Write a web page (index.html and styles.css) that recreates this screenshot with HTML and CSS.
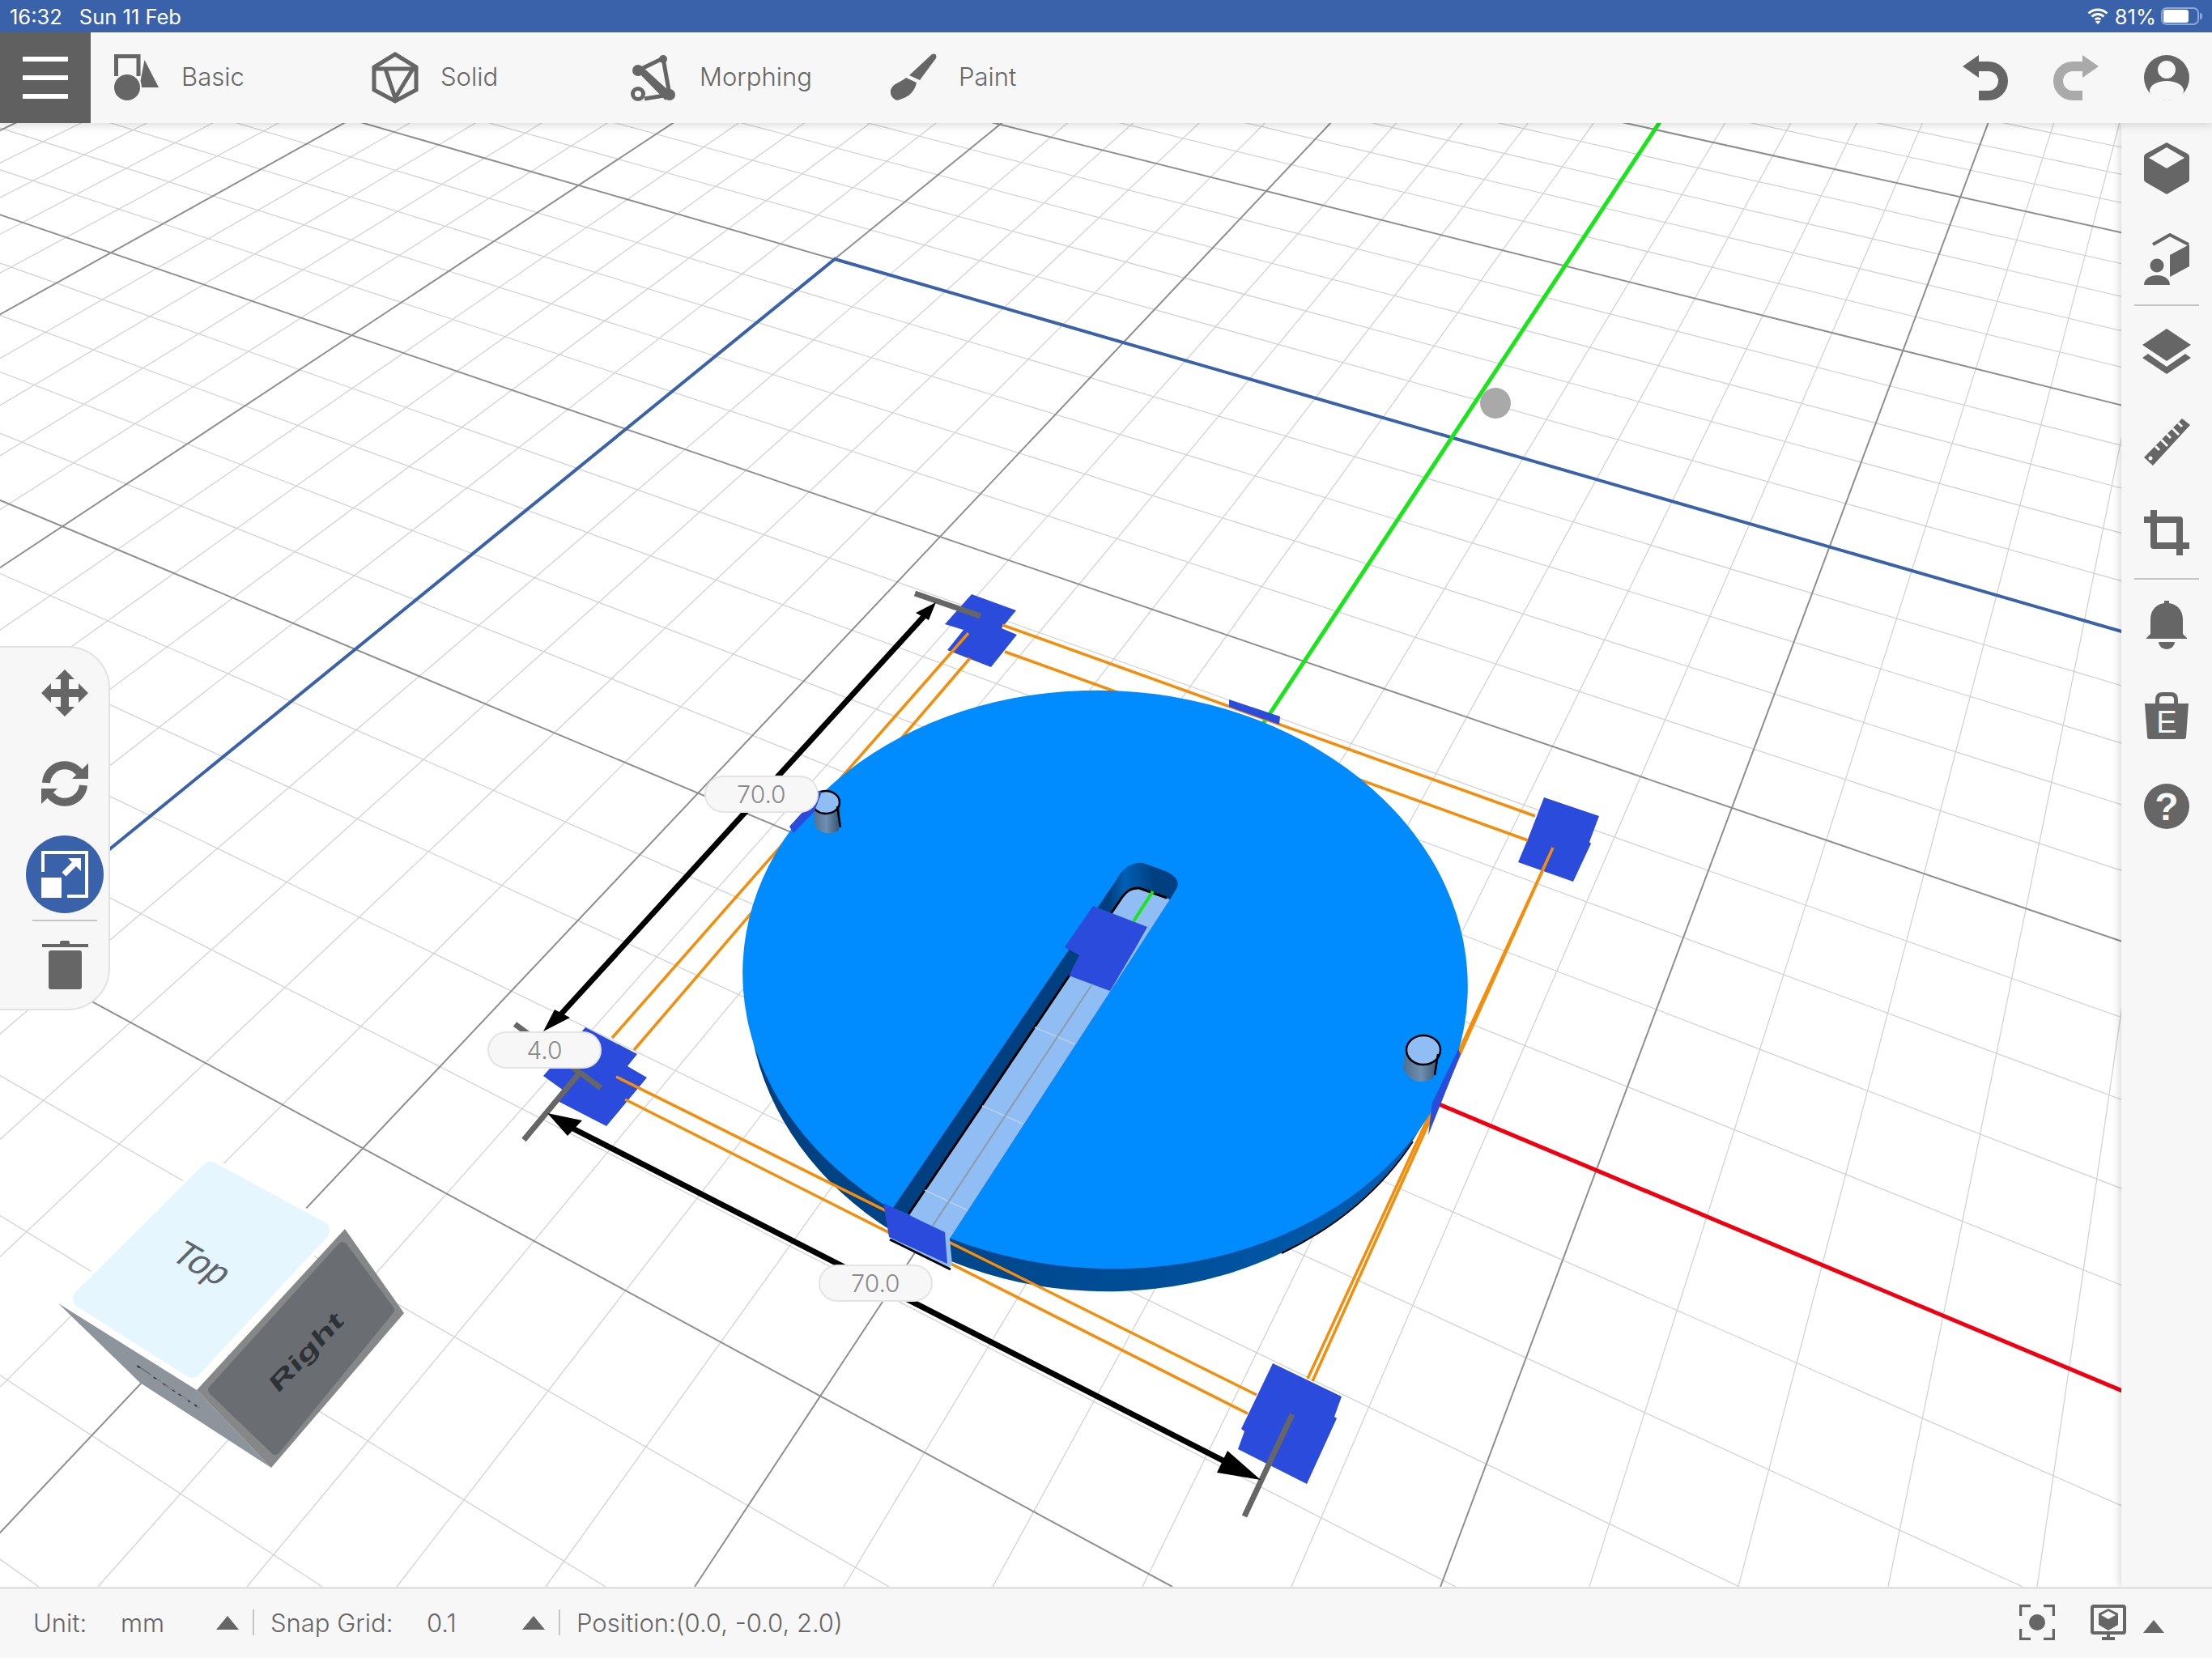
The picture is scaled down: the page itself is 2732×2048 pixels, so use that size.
FILE: index.html
```html
<!DOCTYPE html>
<html lang="en">

<head>
    <meta charset="UTF-8">
    <meta name="viewport" content="width=device-width, initial-scale=1.0">
    <title>Morphing - Scale</title>
    <link rel="stylesheet" href="styles.css">
</head>
<body>
<div class="app">

    <!-- iPad status bar -->
    <div class="ios-bar">
        <span class="ios-time">16:32</span>
        <span class="ios-date">Sun 11 Feb</span>
        <div class="ios-right">
            <svg width="26" height="20" viewBox="0 0 26 20">
                <path class="wifi" d="M1.5 6.5C8 .5 18 .5 24.5 6.5M5.5 10.5C10 6.5 16 6.5 20.500 10.500M9.500 14.200C11.500 12.600 14.500 12.600 16.500 14.200"/>
                <path class="wifi-dot" d="M13 20l-3.200-3.400C11.500 15.400 14.500 15.400 16.200 16.600z"/>
            </svg>
            <span class="ios-pct">81%</span>
            <div class="battery"><div class="battery-level"></div></div>
            <div class="battery-nub"></div>
        </div>
    </div>

    <!-- Top toolbar -->
    <div class="toolbar">
        <div class="menu-btn">
            <span></span><span></span><span></span>
        </div>
        <div class="tool">
            <svg class="ico" width="64" height="64" viewBox="0 0 64 64">
                <path class="ico-line" d="M7.500 30V5.500H35V30"/>
                <path d="M42.500 10L60 44H36z"/>
                <circle class="ico-cut" cx="21" cy="44" r="17"/>
            </svg>
            <span>Basic</span>
        </div>
        <div class="tool">
            <svg class="ico" width="64" height="64" viewBox="0 0 64 64">
                <path class="ico-line" d="M32 3L58 19V47L32 61L6 47V19zM7 21H57M20 21L32 57L54 21"/>
            </svg>
            <span>Solid</span>
        </div>
        <div class="tool">
            <svg class="ico" width="64" height="64" viewBox="0 0 64 64">
                <path class="ico-line" d="M12 23L43 8L51 53L20 58"/>
                <path d="M9 22L17 18L52 50L46 60z"/>
                <circle cx="43" cy="9" r="5"/>
                <circle cx="12" cy="23" r="7"/>
                <circle cx="51" cy="53" r="7"/>
                <circle class="ico-ring" cx="12" cy="52" r="6.500"/>
            </svg>
            <span>Morphing</span>
        </div>
        <div class="tool">
            <svg class="ico" width="64" height="64" viewBox="0 0 64 64">
                <path d="M55 3C60 1 61 5 60 8L40 35L27 29z"/>
                <path d="M23 32L36 38C34 48 28 56 12 60C5 58 2 50 5 45C9 38 16 38 23 32z"/>
            </svg>
            <span>Paint</span>
        </div>
        <div class="toolbar-right">
            <svg class="ico" width="56" height="56" viewBox="0 0 56 56">
                <path d="M0 14L20 0V28z"/>
                <path class="undo-line" d="M18 14H32A18 18 0 0 1 32 50H20"/>
            </svg>
            <svg class="ico ico-off" width="56" height="56" viewBox="0 0 56 56">
                <path d="M56 14L36 0V28z"/>
                <path class="undo-line" d="M38 14H24A18 18 0 0 0 24 50H36"/>
            </svg>
            <svg class="ico" width="56" height="56" viewBox="0 0 56 56">
                <circle cx="28" cy="28" r="28"/>
                <circle class="ico-white" cx="28" cy="18" r="11"/>
                <ellipse class="ico-white" cx="28" cy="44" rx="21" ry="12"/>
            </svg>
        </div>
    </div>

    <div class="workspace">
        <div class="viewport">
            <svg class="scene" width="2620" height="1808" viewBox="0 152 2620 1808">
                <defs>
                    <linearGradient id="rim" gradientUnits="userSpaceOnUse" x1="930" y1="0" x2="1800" y2="0">
                        <stop offset="0" stop-color="#003f7e"/>
                        <stop offset="0.6" stop-color="#004e98"/>
                        <stop offset="1" stop-color="#0060b4"/>
                    </linearGradient>
                    <linearGradient id="cap" gradientUnits="userSpaceOnUse" x1="1370" y1="0" x2="1425" y2="0">
                        <stop offset="0" stop-color="#004080"/>
                        <stop offset="0.35" stop-color="#0060b4"/>
                        <stop offset="1" stop-color="#004080"/>
                    </linearGradient>
                    <linearGradient id="peg" x1="0" y1="0" x2="1" y2="0">
                        <stop offset="0" stop-color="#4f6e8e"/>
                        <stop offset="0.5" stop-color="#6f8fb0"/>
                        <stop offset="1" stop-color="#33506e"/>
                    </linearGradient>
                </defs>

                <!-- grid: both pencils run out of their vanishing point -->
                <path class="grid-minor" d="M2989 -1274L-3563 1960M2989 -1274L-3379 1960M2989 -1274L-3194 1960M2989 -1274L-3010 1960M2989 -1274L-2642 1960M2989 -1274L-2458 1960M2989 -1274L-2273 1960M2989 -1274L-2089 1960M2989 -1274L-1721 1960M2989 -1274L-1537 1960M2989 -1274L-1352 1960M2989 -1274L-1168 1960M2989 -1274L-800 1960M2989 -1274L-616 1960M2989 -1274L-431 1960M2989 -1274L-247 1960M2989 -1274L121 1960M2989 -1274L305 1960M2989 -1274L490 1960M2989 -1274L674 1960M2989 -1274L1042 1960M2989 -1274L1226 1960M2989 -1274L1411 1960M2989 -1274L1595 1960M2989 -1274L1963 1960M2989 -1274L2147 1960M2989 -1274L2332 1960M2989 -1274L2516 1960"/>
                <path class="grid-minor" d="M-4570 -1300L48 1960M-4570 -1300L398 1960M-4570 -1300L748 1960M-4570 -1300L1098 1960M-4570 -1300L1798 1960M-4570 -1300L2148 1960M-4570 -1300L2498 1960M-4570 -1300L2848 1960M-4570 -1300L3548 1960M-4570 -1300L3898 1960M-4570 -1300L4248 1960M-4570 -1300L4598 1960M-4570 -1300L5298 1960M-4570 -1300L5648 1960M-4570 -1300L5998 1960M-4570 -1300L6348 1960M-4570 -1300L7048 1960M-4570 -1300L7398 1960M-4570 -1300L7748 1960M-4570 -1300L8098 1960M-4570 -1300L8798 1960M-4570 -1300L9148 1960M-4570 -1300L9498 1960M-4570 -1300L9848 1960M-4570 -1300L10548 1960M-4570 -1300L10898 1960M-4570 -1300L11248 1960M-4570 -1300L11598 1960"/>
                <path class="grid-major" d="M2989 -1274L-3747 1960M2989 -1274L-2826 1960M2989 -1274L-1905 1960M2989 -1274L-984 1960M2989 -1274L-63 1960M2989 -1274L858 1960M2989 -1274L1779 1960"/>
                <path class="grid-major" d="M-4570 -1300L1448 1960M-4570 -1300L3198 1960M-4570 -1300L4948 1960M-4570 -1300L6698 1960M-4570 -1300L8448 1960M-4570 -1300L10198 1960"/>

                <!-- axes -->
                <path class="axis-blue" d="M-984 1960L1031 320L6698 1960"/>
                <path class="axis-green" d="M1365 1190L2989 -1274"/>
                <path class="axis-red" d="M1365 1191L3198 1960"/>
                <circle class="origin-dot" cx="1847" cy="498" r="19"/>

                <!-- view cube -->
                <polygon class="cube-white" points="258,1427 420,1515 243,1717 72,1610"/>
                <polygon class="cube-left" points="72,1610 173,1708 335,1813 243,1717"/>
                <text class="cube-front" transform="matrix(1.150 0.780 -0.050 0.080 166 1686)">Front</text>
                <polygon class="cube-right" points="426,1518 499,1622 335,1813 243,1717"/>
                <polygon class="cube-right-in" points="263,1717 423,1540 481,1618 340,1791"/>
                <polygon class="cube-top" points="260,1447 395,1520 237,1690 102,1604"/>
                <text class="cube-top-text" transform="matrix(1.050 0.600 -0.900 0.900 208 1554)">Top</text>
                <text class="cube-right-text" transform="matrix(0.900 -0.960 0.500 0.640 343 1722)">Right</text>

                <!-- corner handles, under the wires -->
                <polygon class="handle" points="1200,734 1255,754 1237,776 1256,784 1224,824 1170,803 1190,778 1167,771"/>
                <polygon class="handle" points="723,1269 787,1302 775,1317 799,1331 749,1391 685,1358 696,1347 671,1329"/>
                <polygon class="handle" points="1907,985 1975,1008 1963,1040 1965,1042 1943,1089 1875,1065 1888,1034"/>
                <polygon class="handle" points="1572,1684 1657,1725 1648,1750 1651,1752 1614,1833 1529,1790 1537,1768 1533,1765"/>

                <!-- disc side -->
                <ellipse class="disc-rim" cx="1360" cy="1233" rx="436" ry="362" transform="rotate(2.850 1360 1233)"/>
                <path class="disc-edge" d="M1745 1410A436 362 2.850 0 1 1583 1548"/>

                <!-- bounding box wires -->
                <path class="wire" d="M1238 772L1896 1008M1241 805L1887 1038M1196 782L756 1282M1198 813L783 1297M761 1330L1552 1723M772 1358L1541 1746M1918 1047L1615 1703M1918 1047L1621 1706"/>

                <!-- disc top and slot -->
                <ellipse class="disc-top" cx="1365" cy="1210" rx="448" ry="357" transform="rotate(2.850 1365 1210)"/>
                <path class="slot-wall" d="M1103 1492L1378 1088Q1390 1064 1412 1066L1437 1075Q1460 1084 1453 1098L1445 1111L1173 1530L1122 1500z"/>
                <path class="slot-floor" d="M1122 1500L1386 1108Q1394 1096 1407 1097L1445 1111L1173 1530z"/>
                <path class="slot-edge" d="M1122 1500L1386 1108Q1394 1096 1407 1097L1441 1109"/>
                <path class="slot-minor" d="M1278 1269L1328 1290M1213 1366L1263 1388M1142 1470L1195 1495"/>
                <path class="slot-major" d="M1348 1217L1152 1514"/>
                <path class="slot-green" d="M1424 1101L1400 1138"/>

                <!-- pegs -->
                <path class="peg" d="M1003 991L1007 1022Q1020 1034 1036 1026L1038 991z"/>
                <ellipse class="peg-top" cx="1020" cy="991" rx="17" ry="14"/>
                <path class="peg-line" d="M1034 996L1038 1022"/>
                <path class="peg" d="M1736 1297L1733 1320Q1745 1344 1770 1332L1778 1297z"/>
                <ellipse class="peg-top" cx="1758" cy="1297" rx="21" ry="18"/>
                <path class="peg-line" d="M1776 1302L1772 1328"/>

                <!-- edge handles -->
                <polygon class="handle" points="1518,864 1581,885 1580,895 1518,873"/>
                <polygon class="handle" points="975,1021 980,1029 1006,1002 1015,978 1008,976 1003,990"/>
                <polygon class="handle" points="1801,1296 1804,1302 1764,1402 1769,1362"/>
                <polygon class="handle" points="1350,1119 1417,1145 1403,1170 1371,1224 1320,1205 1333,1180 1315,1170"/>
                <polygon class="slot-floor" points="1099,1530 1167,1522 1173,1530 1176,1562 1172,1566"/>
                <path class="slot-under" d="M1099 1531L1174 1568"/>
                <polygon class="handle" points="1091,1486 1167,1522 1170,1561 1098,1528"/>

                <!-- dimension arrows -->
                <path class="dim-tick" d="M1130 733L1211 761M636 1265L742 1344M716 1325L647 1408M1596 1747L1537 1873"/>
                <path class="dim" d="M1145 757L688 1258M690 1385L1530 1814"/>
                <polygon class="dim-head" points="1156,744 1131,757 1147,766"/>
                <polygon class="dim-head" points="671,1274 685,1247 704,1257"/>
                <polygon class="dim-head" points="676,1375 719,1384 701,1403"/>
                <polygon class="dim-head" points="1557,1828 1516,1792 1503,1819"/>
            </svg>

            <!-- size labels -->
            <div class="dim-label dim-label-a">70.0</div>
            <div class="dim-label dim-label-b">4.0</div>
            <div class="dim-label dim-label-c">70.0</div>

            <!-- Move / rotate / scale panel -->
            <div class="gizmo-panel">
                <div class="gizmo-item">
                    <svg class="ico" width="58" height="58" viewBox="0 0 58 58">
                        <path d="M29 0L41 12H34V24H46V17L58 29L46 41V34H34V46H41L29 58L17 46H24V34H12V41L0 29L12 17V24H24V12H17z"/>
                    </svg>
                </div>
                <div class="gizmo-item">
                    <svg class="ico" width="58" height="56" viewBox="0 0 58 56">
                        <path class="rotate-line" d="M6 27A23 23 0 0 1 47 14"/>
                        <path d="M58 3V22H38z"/>
                        <path class="rotate-line" d="M52 30A23 23 0 0 1 11 42"/>
                        <path d="M0 53V34H20z"/>
                    </svg>
                </div>
                <div class="gizmo-item">
                    <div class="gizmo-active">
                        <svg width="58" height="58" viewBox="0 0 58 58">
                            <path class="scale-frame" d="M2 26V2H56V56H32"/>
                            <rect class="scale-fill" x="0" y="33" width="25" height="25"/>
                            <path class="scale-arrow" d="M28 29L44 13"/>
                            <path class="scale-fill" d="M33 9H49V25z"/>
                        </svg>
                    </div>
                </div>
                <div class="panel-sep"></div>
                <div class="gizmo-item gizmo-last">
                    <svg class="ico" width="57" height="60" viewBox="0 0 57 60">
                        <rect x="0" y="4" width="57" height="4"/>
                        <rect x="22" y="0" width="12" height="6" rx="2"/>
                        <rect x="8" y="12" width="41" height="48" rx="3"/>
                    </svg>
                </div>
            </div>
        </div>

        <!-- Right sidebar -->
        <div class="sidebar">
            <div class="side-item">
                <svg class="ico" width="56" height="64" viewBox="0 0 56 64">
                    <path d="M28 0L54 14Q56 15 56 18V46Q56 48 54 49L28 64L2 49Q0 48 0 46V18Q0 15 2 14z"/>
                    <path class="ico-white" d="M28 6L50 19L28 32L6 19z"/>
                </svg>
            </div>
            <div class="side-item">
                <svg class="ico" width="56" height="64" viewBox="0 0 56 64">
                    <path class="person-line" d="M11 14L32 2L55 14"/>
                    <path d="M32 27L56 14V41L32 54z"/>
                    <circle cx="16" cy="40" r="8.500"/>
                    <path d="M0 64C0 56 8 52 16 52S32 56 32 64z"/>
                </svg>
            </div>
            <div class="side-sep"></div>
            <div class="side-item">
                <svg class="ico" width="60" height="56" viewBox="0 0 60 56">
                    <path d="M30 0L60 20L30 40L0 20z"/>
                    <path d="M7 31L30 47L53 31L60 36L30 56L0 36z"/>
                </svg>
            </div>
            <div class="side-item">
                <svg class="ico" width="57" height="58" viewBox="0 0 57 58">
                    <path d="M47 0L57 8L11 58L0 48z"/>
                    <path class="ruler-ticks" d="M14 34L19 39M21 26L29 34M28 19L33 24M35 12L43 20M42 5L47 10"/>
                    <circle class="ico-white" cx="8" cy="49" r="2.500"/>
                </svg>
            </div>
            <div class="side-item">
                <svg class="ico crop-icon" width="56" height="56" viewBox="0 0 56 56">
                    <path d="M0 8H8V0H16V8H44Q48 8 48 12V40H56V48H48V56H40V48H12Q8 48 8 44V16H0zM16 16V40H40V16z"/>
                </svg>
            </div>
            <div class="side-sep"></div>
            <div class="side-item">
                <svg class="ico" width="50" height="60" viewBox="0 0 50 60">
                    <rect x="22" y="0" width="6" height="6"/>
                    <path d="M25 3C37 3 45 11 45 23V41L50 46V47H0V46L5 41V23C5 11 13 3 25 3z"/>
                    <path d="M15 51H35A10 9 0 0 1 15 51z"/>
                </svg>
            </div>
            <div class="side-item">
                <svg class="ico" width="54" height="58" viewBox="0 0 54 58">
                    <path class="bag-handle" d="M15.500 16V9Q15.500 2.500 22 2.500H32Q38.500 2.500 38.500 9V16"/>
                    <path d="M0 14H54L51 55Q51 58 48 58H6Q3 58 3 55z"/>
                    <text class="bag-letter" x="27" y="50">E</text>
                </svg>
            </div>
            <div class="side-item">
                <svg class="ico" width="56" height="56" viewBox="0 0 56 56">
                    <circle cx="28" cy="28" r="28"/>
                    <text class="help-mark" x="28" y="45">?</text>
                </svg>
            </div>
        </div>
    </div>

    <!-- Bottom status bar -->
    <div class="statusbar">
        <span class="st-label st-unit">Unit:</span>
        <span class="st-value">mm</span>
        <span class="caret"></span>
        <span class="st-sep"></span>
        <span class="st-label st-snap">Snap Grid:</span>
        <span class="st-value">0.1</span>
        <span class="caret"></span>
        <span class="st-sep"></span>
        <span class="st-label">Position:(0.0, -0.0, 2.0)</span>
        <div class="statusbar-right">
            <svg class="ico" width="44" height="44" viewBox="0 0 44 44">
                <path class="focus-corners" d="M1.500 14V1.500H14M30 1.500H42.500V14M42.500 30V42.500H30M14 42.500H1.500V30"/>
                <circle cx="22" cy="22" r="10"/>
            </svg>
            <svg class="ico" width="44" height="44" viewBox="0 0 44 44">
                <rect class="monitor" x="2" y="2" width="40" height="33" rx="2"/>
                <rect x="20" y="35" width="4" height="6"/>
                <rect x="14" y="40" width="16" height="4"/>
                <path d="M22 5L34 11V25L22 32L10 25V11z"/>
                <path class="ico-white" d="M22 8L31 13L22 18L13 13z"/>
            </svg>
            <span class="caret caret-small"></span>
        </div>
    </div>
</div>
</body>
</html>
```

FILE: styles.css
```css
/* General */
body {
    margin: 0;
    padding: 0;
    background-color: #ffffff;
    font-family: "Inter", "Liberation Sans", sans-serif;
    color: #666666;
}

.app {
    width: 2732px;
    height: 2048px;
    display: flex;
    flex-direction: column;
    overflow: hidden;
}

/* iPad status bar */
.ios-bar {
    height: 40px;
    flex: none;
    display: flex;
    align-items: center;
    padding: 0 12px;
    background-color: #3a62aa;
    color: white;
    font-size: 25.500px;
    position: relative;
    z-index: 3;
}

.ios-date {
    margin-left: 21px;
}

.ios-right {
    margin-left: auto;
    display: flex;
    align-items: center;
}

.wifi {
    fill: none;
    stroke: white;
    stroke-width: 3;
}

.wifi-dot {
    fill: white;
}

.ios-pct {
    margin-left: 8px;
}

.battery {
    width: 47px;
    height: 22px;
    margin-left: 6px;
    box-sizing: border-box;
    border: 2px solid #8aa8d8;
    border-radius: 7px;
    padding: 1px;
}

.battery-level {
    width: 31px;
    height: 16px;
    background-color: white;
    border-radius: 3px;
}

.battery-nub {
    width: 3px;
    height: 8px;
    margin-left: 1px;
    background-color: #8aa8d8;
    border-radius: 0 3px 3px 0;
}

/* Top toolbar */
.toolbar {
    height: 112px;
    flex: none;
    display: flex;
    align-items: center;
    background-color: #f7f7f7;
    box-shadow: 0 3px 10px rgba(0, 0, 0, 0.14);
    position: relative;
    z-index: 2;
    font-size: 31px;
    font-weight: 300;
}

.menu-btn {
    width: 112px;
    height: 112px;
    margin-right: 24px;
    display: flex;
    flex-direction: column;
    align-items: center;
    justify-content: center;
    gap: 17px;
    background-color: #606060;
}

.menu-btn span {
    width: 56px;
    height: 6px;
    background-color: white;
}

.tool {
    width: 320px;
    display: flex;
    align-items: center;
    gap: 24px;
}

.tool span {
    margin-top: -3px;
}

.toolbar-right {
    margin-left: auto;
    padding-right: 28px;
    display: flex;
    gap: 56px;
}

/* Icons */
.ico {
    display: block;
    fill: #666666;
}

.ico-off {
    fill: #aaaaaa;
}

.ico-white {
    fill: #f7f7f7;
}

.ico-line {
    fill: none;
    stroke: #666666;
    stroke-width: 5;
}

.ico-cut {
    stroke: #f7f7f7;
    stroke-width: 2;
}

.ico-ring {
    fill: #f7f7f7;
    stroke: #666666;
    stroke-width: 5;
}

.undo-line {
    fill: none;
    stroke: #666666;
    stroke-width: 12;
}

.ico-off .undo-line {
    stroke: #aaaaaa;
}

.person-line {
    fill: none;
    stroke: #666666;
    stroke-width: 4;
}

.ruler-ticks {
    fill: none;
    stroke: #f7f7f7;
    stroke-width: 3;
}

.crop-icon {
    fill-rule: evenodd;
}

.bag-handle {
    fill: none;
    stroke: #666666;
    stroke-width: 5;
}

.bag-letter {
    fill: #f7f7f7;
    font-family: "Liberation Sans", sans-serif;
    font-size: 38px;
    text-anchor: middle;
}

.help-mark {
    fill: #f7f7f7;
    font-family: "Liberation Sans", sans-serif;
    font-size: 48px;
    font-weight: bold;
    text-anchor: middle;
}

.rotate-line {
    fill: none;
    stroke: #666666;
    stroke-width: 10;
}

.focus-corners {
    fill: none;
    stroke: #666666;
    stroke-width: 3.500;
}

.monitor {
    fill: none;
    stroke: #666666;
    stroke-width: 4;
}

/* Workspace */
.workspace {
    flex: 1;
    display: flex;
    min-height: 0;
}

.viewport {
    flex: 1;
    position: relative;
    overflow: hidden;
    background-color: white;
}

.scene {
    display: block;
}

/* Scene parts */
.grid-minor {
    fill: none;
    stroke: #d3d3d3;
    stroke-width: 1.300;
}

.grid-major {
    fill: none;
    stroke: #8f8f8f;
    stroke-width: 2;
}

.axis-blue {
    fill: none;
    stroke: #3a62aa;
    stroke-width: 4;
}

.axis-green {
    fill: none;
    stroke: #19e619;
    stroke-width: 5;
}

.axis-red {
    fill: none;
    stroke: #f00010;
    stroke-width: 5;
}

.origin-dot {
    fill: #a9a9a9;
}

.disc-rim {
    fill: url(#rim);
}

.disc-edge {
    fill: none;
    stroke: black;
    stroke-width: 2;
}

.disc-top {
    fill: #008cff;
}

.slot-wall {
    fill: url(#cap);
}

.slot-floor {
    fill: #8fbdf4;
}

.slot-edge {
    fill: none;
    stroke: black;
    stroke-width: 3;
}

.slot-minor {
    fill: none;
    stroke: #b8d2ec;
    stroke-width: 1.500;
}

.slot-major {
    fill: none;
    stroke: #8d9aa8;
    stroke-width: 2;
}

.slot-green {
    fill: none;
    stroke: #19e619;
    stroke-width: 4;
}

.slot-under {
    fill: none;
    stroke: black;
    stroke-width: 3;
}

.handle {
    fill: #2b4bdc;
}

.wire {
    fill: none;
    stroke: #f58c0a;
    stroke-width: 3.500;
}

.dim {
    fill: none;
    stroke: black;
    stroke-width: 7;
}

.dim-head {
    fill: black;
}

.dim-tick {
    fill: none;
    stroke: #666666;
    stroke-width: 7;
}

.peg {
    fill: url(#peg);
}

.peg-top {
    fill: #8fbdf4;
    stroke: black;
    stroke-width: 2.500;
}

.peg-line {
    fill: none;
    stroke: black;
    stroke-width: 2.500;
}

/* View cube */
.cube-white {
    fill: white;
}

.cube-top {
    fill: #e6f6ff;
    stroke: #e6f6ff;
    stroke-width: 24;
    stroke-linejoin: round;
}

.cube-right {
    fill: #858789;
}

.cube-right-in {
    fill: #6a6e73;
    stroke: #6a6e73;
    stroke-width: 12;
    stroke-linejoin: round;
}

.cube-left {
    fill: #8d949c;
}

.cube-front {
    fill: #2d3237;
    font-family: "Liberation Sans", sans-serif;
    font-size: 30px;
}

.cube-top-text {
    fill: #5d666e;
    font-family: "Liberation Sans", sans-serif;
    font-size: 36px;
}

.cube-right-text {
    fill: #2d3237;
    font-family: "Liberation Sans", sans-serif;
    font-size: 36px;
    font-weight: bold;
}

/* Size labels */
.dim-label {
    position: absolute;
    width: 141px;
    height: 46px;
    box-sizing: border-box;
    display: flex;
    align-items: center;
    justify-content: center;
    background-color: #f7f7f7;
    border: 2px solid #e4e4e4;
    border-radius: 23px;
    color: #8a8a8a;
    font-size: 30px;
    font-weight: 300;
}

.dim-label-a {
    left: 870px;
    top: 806px;
}

.dim-label-b {
    left: 602px;
    top: 1122px;
}

.dim-label-c {
    left: 1011px;
    top: 1410px;
}

/* Move / rotate / scale panel */
.gizmo-panel {
    position: absolute;
    left: 0;
    top: 648px;
    width: 134px;
    height: 446px;
    box-sizing: border-box;
    padding-left: 26px;
    background-color: #f7f7f7;
    border-radius: 0 50px 50px 0;
    box-shadow: 0 0 0 2px #e2e2e2;
    display: flex;
    flex-direction: column;
    align-items: center;
}

.gizmo-item {
    width: 100%;
    height: 112px;
    display: flex;
    align-items: center;
    justify-content: center;
    flex: none;
}

.gizmo-last {
    height: 108px;
}

.gizmo-active {
    width: 96px;
    height: 96px;
    display: flex;
    align-items: center;
    justify-content: center;
    background-color: #3a62aa;
    border-radius: 50%;
}

.scale-frame {
    fill: none;
    stroke: white;
    stroke-width: 4;
}

.scale-fill {
    fill: white;
}

.scale-arrow {
    fill: none;
    stroke: white;
    stroke-width: 7;
}

.panel-sep {
    width: 80px;
    height: 2px;
    flex: none;
    background-color: #c4c4c4;
}

/* Right sidebar */
.sidebar {
    width: 112px;
    flex: none;
    background-color: #f7f7f7;
    box-shadow: -3px 0 8px rgba(0, 0, 0, 0.14);
    position: relative;
    z-index: 1;
}

.side-item {
    height: 112px;
    display: flex;
    align-items: center;
    justify-content: center;
}

.side-sep {
    height: 2px;
    margin: 0 16px;
    background-color: #c4c4c4;
}

/* Bottom status bar */
.statusbar {
    height: 88px;
    flex: none;
    box-sizing: border-box;
    display: flex;
    align-items: center;
    padding: 0 59px 3px 41px;
    background-color: #f7f7f7;
    border-top: 3px solid #e3e3e3;
    position: relative;
    z-index: 2;
    font-size: 31px;
    font-weight: 300;
}

.st-unit {
    width: 108px;
}

.st-snap {
    width: 193px;
}

.st-value {
    width: 118px;
}

.st-sep {
    width: 2px;
    height: 32px;
    margin: 0 20px 0 17px;
    background-color: #c4c4c4;
}

.caret {
    width: 0;
    height: 0;
    border-left: 14px solid transparent;
    border-right: 14px solid transparent;
    border-bottom: 17px solid #666666;
}

.caret-small {
    border-left-width: 13px;
    border-right-width: 13px;
    border-bottom-width: 16px;
    margin: 10px 0 0 -23px;
}

.statusbar-right {
    margin-left: auto;
    display: flex;
    align-items: center;
    gap: 44px;
}
```
